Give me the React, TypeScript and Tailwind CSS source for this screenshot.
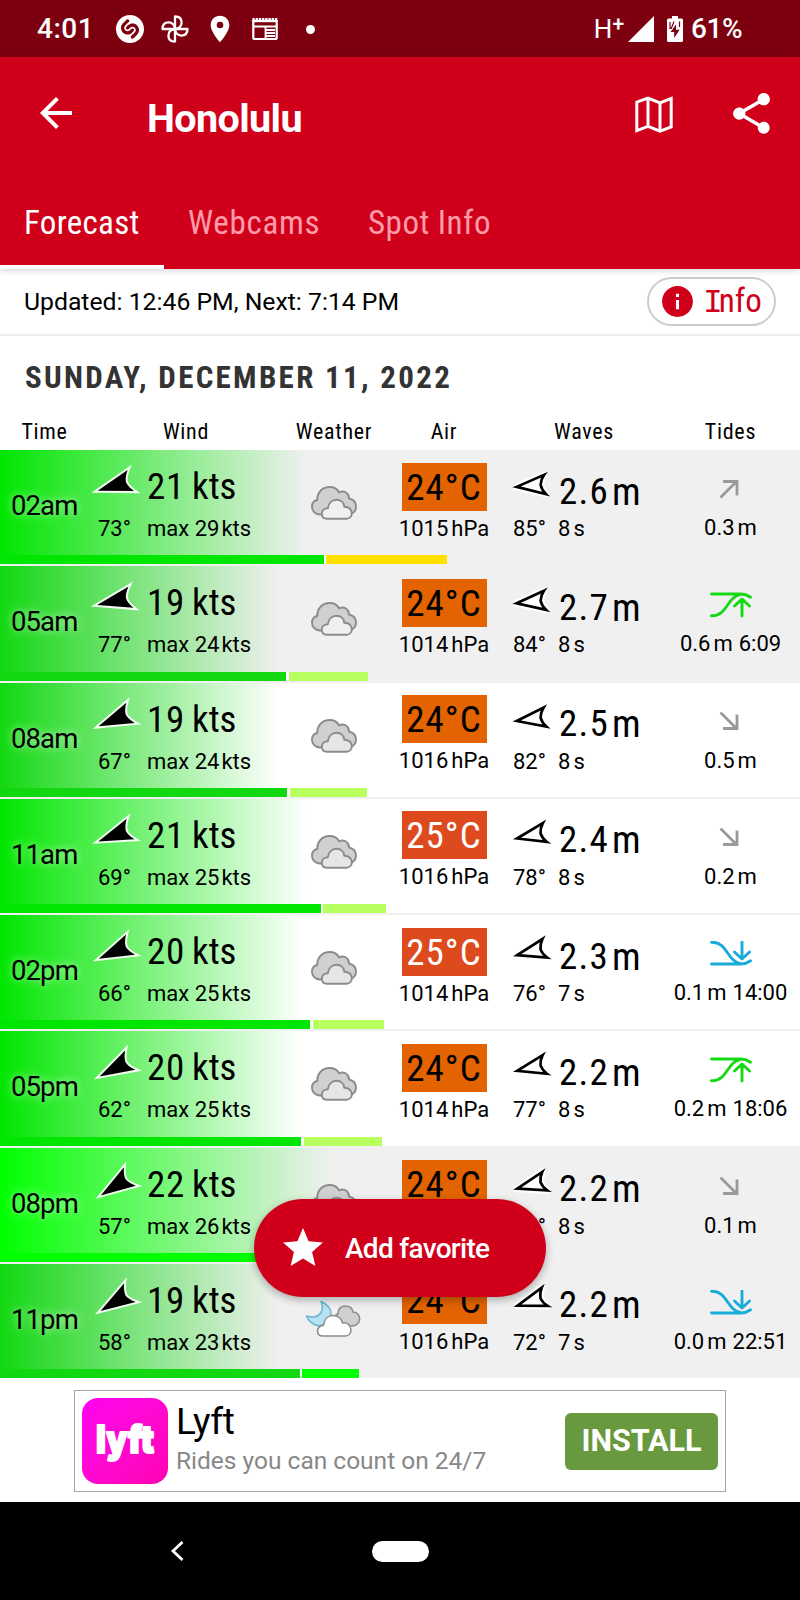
import { MdArrowBack, MdInfo, MdLocationOn, MdShare, MdStar } from "react-icons/md";
import { SiShazam } from "react-icons/si";

type Tide = "rising" | "falling" | "high" | "low";

interface Hour {
  time: string;
  wind: number;
  gust: number;
  windDir: number;
  air: number;
  pressure: number;
  wave: string;
  waveDir: number;
  period: number;
  tide: Tide;
  tideHeight: string;
  tideTime?: string;
  color: string;
  fade: number;
  bar: number;
  gustFrom: number;
  gustTo: number;
  gustColor: string;
  night?: boolean;
  clear?: boolean;
}

const LIME = "#b8ff60";

const hours: Hour[] = [
  { time: "02am", wind: 21, gust: 29, windDir: 73, air: 24, pressure: 1015, wave: "2.6", waveDir: 85, period: 8, tide: "rising", tideHeight: "0.3", color: "#00e600", fade: 308, bar: 324, gustFrom: 326, gustTo: 447, gustColor: "#ffe000", night: true },
  { time: "05am", wind: 19, gust: 24, windDir: 77, air: 24, pressure: 1014, wave: "2.7", waveDir: 84, period: 8, tide: "high", tideHeight: "0.6", tideTime: "6:09", color: "#12d812", fade: 280, bar: 286, gustFrom: 289, gustTo: 368, gustColor: LIME, night: true },
  { time: "08am", wind: 19, gust: 24, windDir: 67, air: 24, pressure: 1016, wave: "2.5", waveDir: 82, period: 8, tide: "falling", tideHeight: "0.5", color: "#12d812", fade: 280, bar: 287, gustFrom: 290, gustTo: 367, gustColor: LIME },
  { time: "11am", wind: 21, gust: 25, windDir: 69, air: 25, pressure: 1016, wave: "2.4", waveDir: 78, period: 8, tide: "falling", tideHeight: "0.2", color: "#00e600", fade: 308, bar: 321, gustFrom: 323, gustTo: 386, gustColor: LIME },
  { time: "02pm", wind: 20, gust: 25, windDir: 66, air: 25, pressure: 1014, wave: "2.3", waveDir: 76, period: 7, tide: "low", tideHeight: "0.1", tideTime: "14:00", color: "#00e600", fade: 304, bar: 310, gustFrom: 313, gustTo: 384, gustColor: LIME },
  { time: "05pm", wind: 20, gust: 25, windDir: 62, air: 24, pressure: 1014, wave: "2.2", waveDir: 77, period: 8, tide: "high", tideHeight: "0.2", tideTime: "18:06", color: "#00e600", fade: 300, bar: 301, gustFrom: 304, gustTo: 382, gustColor: LIME },
  { time: "08pm", wind: 22, gust: 26, windDir: 57, air: 24, pressure: 1015, wave: "2.2", waveDir: 75, period: 8, tide: "falling", tideHeight: "0.1", color: "#00ff00", fade: 332, bar: 340, gustFrom: 342, gustTo: 400, gustColor: LIME, night: true },
  { time: "11pm", wind: 19, gust: 23, windDir: 58, air: 24, pressure: 1016, wave: "2.2", waveDir: 72, period: 7, tide: "low", tideHeight: "0.0", tideTime: "22:51", color: "#12d812", fade: 280, bar: 300, gustFrom: 302, gustTo: 359, gustColor: "#00ff00", night: true, clear: true },
];

const columns = "grid grid-cols-[92px_188px_108px_112px_168px_125px]";

const PinwheelIcon = () => (
  <svg className="size-7" viewBox="0 0 28 28" fill="none" stroke="white" strokeWidth="2.3" strokeLinejoin="round">
    {[0, 90, 180, 270].map((r) => (
      <path key={r} transform={`rotate(${r} 14 14)`} d="M14 14V1.5C18.2 1.5 20.6 4 20.6 7.6C20.6 11 18 14 14 14Z" />
    ))}
  </svg>
);

const NewsIcon = () => (
  <svg className="h-6 w-[26px]" viewBox="0 0 26 24" fill="none" stroke="white">
    <path d="M1.3 3V20.5Q1.3 22 2.8 22H23.2Q24.7 22 24.7 20.5V3" strokeWidth="2.2" />
    <path d="M0.5 2.6H25.5" strokeWidth="3.4" strokeDasharray="2.3 0.9" />
    <path d="M0.5 4H25.5" strokeWidth="2.4" />
    <path d="M2 9.5H24M13.5 10V21M14 13H23M14 16H23M14 19H23" strokeWidth="1.8" />
  </svg>
);

const BatteryIcon = () => (
  <svg className="h-[26px] w-4" viewBox="0 0 16 26">
    <path fill="white" d="M5 0H11V2.5H14.5Q16 2.5 16 4V24.5Q16 26 14.5 26H1.5Q0 26 0 24.5V4Q0 2.5 1.5 2.5H5Z" />
    <path fill="#7c000f" d="M9 8.5L3.5 16H7.2V22L12.6 13.7H9Z" />
    <path fill="none" stroke="#7c000f" strokeWidth="1.2" d="M3 6V13M7 5.5L4 13M12.5 5.5V11" />
  </svg>
);

const MapIcon = () => (
  <svg className="h-[38px] w-[38px]" viewBox="0 0 38 38" fill="none" stroke="white" strokeWidth="3">
    <path d="M1.8 6.2L13 2.2L25 7L36.2 2.4V31L25 35.2L13 30.4L1.8 34.6ZM13 2.2V30.4M25 7V35.2" />
  </svg>
);

const WindArrow = ({ deg }: { deg: number }) => (
  <svg className="-mr-1.5 h-[66px] w-[62px] shrink-0 overflow-visible" viewBox="-31 -33 62 66">
    <path
      transform={`rotate(${deg + 180})`}
      d="M0 -26.5L11 8.2Q5 3.6 0 3Q-5 3.6 -11 8.2Z"
      stroke="white"
      strokeOpacity="0.9"
      strokeWidth="4"
      strokeMiterlimit="10"
      paintOrder="stroke"
    />
  </svg>
);

const WaveArrow = ({ deg }: { deg: number }) => {
  const d = "M0 -21.5L9.6 7Q5 3.2 0 2.6Q-5 3.2 -9.6 7Z";
  return (
    <svg className="ml-[15px] -mr-0.5 h-[66px] w-[46px] shrink-0 overflow-visible" viewBox="-23 -35 46 66">
      <g transform={`rotate(${deg + 180})`} strokeMiterlimit="10">
        <path d={d} fill="white" stroke="white" strokeWidth="7" strokeLinejoin="round" />
        <path d={d} fill="white" stroke="black" strokeWidth="2.7" />
      </g>
    </svg>
  );
};

const CloudsIcon = ({ light }: { light?: boolean }) => (
  <svg className="h-[34px] w-[46px]" viewBox="0 0 46 34" stroke="#8c8c8c" strokeWidth="1.9" strokeLinejoin="round">
    <path fill="#d0d0d0" d="M9 28.5C3.5 28 .9 24.5 1 20.5C1.1 17 3.5 14.5 6.3 14C6 6 12 1 18.5 1C23 1 26.5 3 28 6.3C33 4.2 38 7 38 12.5C42.5 13.5 45 16.5 45 20.5C45 24.5 42 27.5 38 28.5Z" />
    <path fill={light ? "#e6e6e6" : "#f0f0f0"} d="M16 32.7C12.5 32.7 10.8 30.5 10.8 27.8C10.8 24.5 13.5 22.3 16.8 22.3C17.5 17 21 13.8 25.5 13.8C30 13.8 33 16.8 33.2 20.8C37.5 20.5 40.8 23.5 40.8 27.3C40.8 30.5 38.5 32.7 35.5 32.7Z" />
  </svg>
);

const MoonCloudsIcon = () => (
  <svg className="-ml-0.5 h-[38px] w-14" viewBox="0 0 56 38" strokeWidth="1.5" strokeLinejoin="round">
    <path fill="#b5e3f2" stroke="#6ab4d0" d="M16 1.5C22 4 26.5 9 26 14C25 21 18 27 12 25.5C7 24 3 20 1.5 16C8 18 13 17 16 12.5C18 9 17.5 5 16 1.5Z" />
    <path fill="#cfcfcf" stroke="#8c8c8c" d="M33 25C29 20 30 14 33 14C33 8 37 5.5 41 6C45 6 48 9 48 12C52 12 54.7 15 54.7 19C54.7 23 51 26 47 26Z" />
    <path fill="white" stroke="#8c8c8c" d="M18 36C14.5 36 12.5 34 12.5 31C12.5 28 15 25.5 18.5 25.5C19 19 23 15.5 28 15.5C33 15.5 37 19 37.5 23C42 22 46 25.5 46 30C46 33.5 43.5 36 40 36Z" />
  </svg>
);

const TideIcon = ({ tide }: { tide: Tide }) => {
  if (tide === "rising" || tide === "falling") {
    return (
      <svg className="mr-[3px] size-5" viewBox="0 0 20 20" fill="none" stroke="#999" strokeWidth="2.8">
        <path
          transform={tide === "falling" ? "matrix(1 0 0 -1 0 19)" : undefined}
          d="M1.5 18.5L17.5 2.5M4 2.5H18V16.5"
        />
      </svg>
    );
  }
  const high = tide === "high";
  return (
    <svg className="h-[26px] w-[42px]" viewBox="0 0 42 26" fill="none" stroke={high ? "#16d916" : "#19acd8"} strokeWidth="2.9" strokeLinecap="round" strokeLinejoin="round">
      <path
        transform={high ? undefined : "matrix(1 0 0 -1 0 25)"}
        d="M1.5 2H31C36 2 38 3.5 40.5 5.2M1.5 23.7C17 24.5 17 5 30 2.5M32 24V8M24.5 14L32 7L39.5 14"
      />
    </svg>
  );
};

const HourRow = ({ hour }: { hour: Hour }) => (
  <div className={`h-[116.25px] ${hour.night ? "bg-[#f0f0f0]" : "bg-white"}`}>
    <div
      className="h-[114.25px]"
      style={{
        background: `linear-gradient(to right, ${hour.color}, transparent ${hour.fade}px)`,
      }}
    >
      <div className={`${columns} h-[105.25px]`}>
        <div className="pt-[40px] pl-[11px] text-[27.5px] leading-[32px] tracking-[-0.9px] [text-shadow:0_0_8px_rgba(255,255,255,0.7)]">
          {hour.time}
        </div>
        <div>
          <div className="flex h-[67px]">
            <WindArrow deg={hour.windDir} />
            <div className="-ml-px flex pt-[15px] text-[37px] leading-[44px] tracking-[0.8px] font-stretch-[75%]">
              <span className="w-[45px]">{hour.wind}</span>
              <span className="tracking-normal">kts</span>
            </div>
          </div>
          <div className="flex pl-1.5 text-[22px] leading-[24px]">
            <span className="w-[49px]">{hour.windDir}°</span>
            <span className="whitespace-nowrap">max {hour.gust}</span>
            <span className="ml-0.5">kts</span>
          </div>
        </div>
        <div className="flex justify-center pt-9">
          {hour.clear ? <MoonCloudsIcon /> : <CloudsIcon light={!hour.night} />}
        </div>
        <div className="flex flex-col items-center pt-[12.5px]">
          <div
            className={`flex h-12 w-[85px] justify-center text-[37px] leading-[50px] tracking-[1px] font-stretch-[75%] ${
              hour.air > 24 ? "bg-[#dc4a1e] text-white" : "bg-[#e26300]"
            }`}
          >
            {hour.air}°C
          </div>
          <div className="mt-1.5 flex gap-[3px] text-[22px] leading-[24px]">
            <span>{hour.pressure}</span>
            <span>hPa</span>
          </div>
        </div>
        <div>
          <div className="flex h-[67px]">
            <WaveArrow deg={hour.waveDir} />
            <div className="flex pt-[19.5px] text-[37px] leading-[44px] tracking-[1.2px] font-stretch-[75%]">
              <span className="w-[53px]">{hour.wave}</span>
              <span className="text-[38px]">m</span>
            </div>
          </div>
          <div className="flex pl-[13px] text-[22px] leading-[24px]">
            <span className="w-[45px]">{hour.waveDir}°</span>
            <span>{hour.period}</span>
            <span className="ml-[3px]">s</span>
          </div>
        </div>
        <div className="flex flex-col items-center text-[22px] leading-[24px]">
          <div className="flex h-[66px] items-center pt-[12px]">
            <TideIcon tide={hour.tide} />
          </div>
          <div className="flex">
            <span>{hour.tideHeight}</span>
            <span className="ml-[3px]">m</span>
            {hour.tideTime && <span className="ml-[6px]">{hour.tideTime}</span>}
          </div>
        </div>
      </div>
      <div className="flex h-[9px]">
        <div style={{ width: hour.bar, background: hour.color }} />
        <div className="bg-white/80" style={{ width: hour.gustFrom - hour.bar }} />
        <div style={{ width: hour.gustTo - hour.gustFrom, background: hour.gustColor }} />
      </div>
    </div>
    <div className="h-0.5 bg-[#f0f0f0]" />
  </div>
);

export default function App() {
  return (
    <div className="relative h-[1600px] w-[800px] overflow-hidden bg-white font-['Roboto',sans-serif] text-black">
      <div className="flex h-[57px] items-center bg-[#7c000f] pt-px text-white">
        <span className="w-[78px] pl-[37px] text-[28px] font-medium tracking-[0.5px]">4:01</span>
        <SiShazam className="ml-[38px] size-7" />
        <div className="ml-[17px]">
          <PinwheelIcon />
        </div>
        <MdLocationOn className="ml-[15px] size-8" />
        <div className="ml-4">
          <NewsIcon />
        </div>
        <div className="ml-[28px] size-[9px] rounded-full bg-white" />
        <div className="mr-[58px] ml-auto flex items-center">
          <span className="text-[26px]">H</span>
          <span className="-mt-2 text-[21px] font-medium">+</span>
          <svg className="ml-1 h-[26px] w-[26px]" viewBox="0 0 26 26" fill="white">
            <path d="M0 26L26 0V26Z" />
          </svg>
          <div className="mr-2 ml-[13px]">
            <BatteryIcon />
          </div>
          <span className="text-[28px] font-medium tracking-[-0.5px]">61%</span>
        </div>
      </div>

      <header className="h-[212px] bg-[#d0001b] text-white shadow-[0_2px_6px_rgba(0,0,0,0.15)]">
        <div className="flex h-[132px] items-start pt-8 pl-8">
          <MdArrowBack className="size-12" />
          <h1 className="ml-[67px] pt-2 text-[39.5px] leading-[44px] font-bold tracking-[-0.6px]">Honolulu</h1>
          <div className="mt-[7px] ml-auto">
            <MapIcon />
          </div>
          <MdShare className="mr-6 ml-[54px] size-[49px]" />
        </div>
        <nav className="flex h-20 text-[33px] leading-[40px] tracking-[0.3px] font-stretch-[75%]">
          <div className="w-[164px] border-b-4 border-white pt-[14px] pl-6">Forecast</div>
          <div className="w-[179px] pt-[14px] pl-6 tracking-[0.7px] text-[#ff9ba8]">Webcams</div>
          <div className="pt-[14px] pl-[25px] tracking-[0.5px] text-[#ff9ba8]">Spot Info</div>
        </nav>
      </header>

      <div className="flex h-[67px] items-center justify-between border-b-2 border-[#eee] pr-6 pl-6 text-[24.75px]">
        <span>Updated: 12:46 PM, Next: 7:14 PM</span>
        <div className="mt-[-1px] flex h-[49px] w-[129px] items-center rounded-full border-2 border-[#ccc] bg-white pl-[10px] text-[#d0001b]">
          <MdInfo className="size-[37px]" />
          <span className="ml-[7px] flex items-baseline pt-[3px] text-[33px] leading-[40px] font-stretch-[75%]">
            <span className="-mr-[3px] font-['Liberation_Mono',monospace] text-[33px] tracking-[-1px]">I</span>nfo
          </span>
        </div>
      </div>

      <h2 className="h-[80px] pt-[22px] pl-[25px] text-[31px] leading-[40px] font-bold tracking-[2.3px] text-[#333] font-stretch-[75%]">
        SUNDAY, DECEMBER 11, 2022
      </h2>
      <div className={`${columns} h-[34px] pt-0.5 text-center text-[22px] leading-[28px] tracking-[0.7px] font-stretch-[75%]`}>
        <div className="pr-[3px]">Time</div>
        <div>Wind</div>
        <div>Weather</div>
        <div>Air</div>
        <div>Waves</div>
        <div>Tides</div>
      </div>

      <div className="h-[928px] overflow-hidden">
        {hours.map((hour) => (
          <HourRow key={hour.time} hour={hour} />
        ))}
      </div>

      <div className="flex h-[124px] justify-center pt-[12px]">
        <div className="flex h-[102px] w-[652px] border border-[#a5a5a5] bg-white pt-[7px] pl-[7px]">
          <div className="size-[86px] overflow-hidden rounded-[16px] bg-linear-to-br from-[#ff00f0] to-[#ff00b4]">
            <svg className="size-[86px]" viewBox="0 0 86 86">
              <text x="14" y="55" textLength="58" lengthAdjust="spacingAndGlyphs" fontFamily="Inter, sans-serif" fontWeight="900" fontSize="38" fill="white" stroke="white" strokeWidth="2" strokeLinejoin="round">
                lyft
              </text>
            </svg>
          </div>
          <div className="ml-2">
            <div className="text-[37px] leading-[47px] tracking-[-0.5px]">Lyft</div>
            <div className="pt-px text-[24.5px] leading-[30px] text-[#888]">Rides you can count on 24/7</div>
          </div>
          <div className="mt-[15px] mr-[7px] ml-auto h-[57px] w-[153px] rounded-md bg-[#68993e] text-center text-[30.5px] leading-[55px] font-bold text-white">
            INSTALL
          </div>
        </div>
      </div>

      <div className="flex h-[98px] items-center bg-black">
        <svg className="ml-[170px] h-5 w-[14px]" viewBox="0 0 14 20" fill="none" stroke="white" strokeWidth="2.8">
          <path d="M12.5 1L3 10L12.5 19" />
        </svg>
        <div className="ml-[188px] h-[21px] w-[57px] rounded-full bg-white" />
      </div>

      <button className="absolute top-[1199px] left-[254px] flex h-[98px] w-[292px] items-center rounded-full bg-[#d0001b] text-white shadow-[0_3px_8px_rgba(0,0,0,0.3)]">
        <MdStar className="ml-[25px] size-12" />
        <span className="ml-[18px] pt-0.5 text-[28px] font-medium tracking-[-0.7px]">Add favorite</span>
      </button>
    </div>
  );
}
